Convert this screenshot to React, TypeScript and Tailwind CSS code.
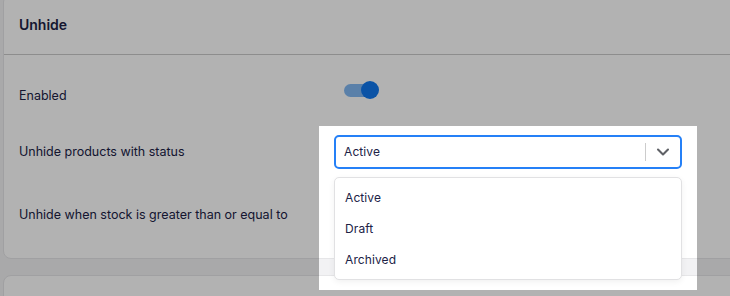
import React from 'react';
import { ChevronDown } from 'lucide-react';

const options = ['Active', 'Draft', 'Archived'];

const Toggle: React.FC = () => (
  <div className="relative w-[35px] h-[18px] ml-[10px] mb-[4px]">
    <div className="absolute left-0 top-[3px] h-[13px] w-[30px] rounded-full bg-[#82b8f2]" />
    <div className="absolute right-0 top-0 h-[18px] w-[18px] rounded-full bg-[#1078ee]" />
  </div>
);

export default function App() {
  return (
    <div className="relative w-[730px] h-[296px] overflow-hidden bg-[#f2f2f4] font-['Inter',sans-serif] text-[12.5px] text-[#202246]">
      <div className="pl-[3px] -mt-[6px] w-[760px]">
        {/* settings card */}
        <div className="bg-white border border-[#e6e6e8] rounded-lg">
          <div className="h-[60px] flex items-center px-[15px] border-b border-[#cbcbcb]">
            <h2 className="text-[14px] font-semibold pb-[1px]">Unhide</h2>
          </div>

          <div className="px-[15px] pt-[20px] pb-[26px] flex flex-col">
            <div className="flex items-center h-[34px]">
              <div className="w-[315px] pt-[8px]">Enabled</div>
              <Toggle />
            </div>

            <div className="flex items-center h-[34px] mt-[26px]">
              <div className="w-[315px] pt-[1px]">Unhide products with status</div>
              <div className="relative w-[348px] text-[12px] tracking-[0.1px]">
                <div className="h-[34px] flex items-center border-2 border-[#2580f7] rounded-[5px] bg-white">
                  <span className="flex-1 pl-[8px]">Active</span>
                  <div className="h-[18px] w-px bg-[#cccccc]" />
                  <div className="w-[34px] flex items-center justify-center text-[#5f6166]">
                    <ChevronDown size={20} strokeWidth={2.5} />
                  </div>
                </div>
                {/* open dropdown menu */}
                <div className="absolute left-0 top-[42px] w-[348px] h-[103px] bg-white border border-[#e1e1e3] rounded-[5px] shadow-[0_2px_6px_rgba(0,0,0,0.06)] pt-[4px] pb-[2px] z-10">
                  {options.map(o => (
                    <div key={o} className="h-[31px] flex items-center pl-[10px]">{o}</div>
                  ))}
                </div>
              </div>
            </div>

            <div className="flex items-center h-[34px] mt-[29px]">
              <div className="w-[315px] pt-[1px]">Unhide when stock is greater than or equal to</div>
              <div className="w-[348px] h-[34px] border border-[#d4d4d8] rounded-[5px]" />
            </div>
          </div>
        </div>

        <div className="mt-[16px] h-[80px] bg-white border border-[#e6e6e8] rounded-lg" />
      </div>

      {/* spotlight overlay */}
      <div className="absolute left-[319px] top-[126px] w-[378px] h-[164px] shadow-[0_0_0_2000px_rgba(0,0,0,0.3)] pointer-events-none z-20" />
    </div>
  );
}
